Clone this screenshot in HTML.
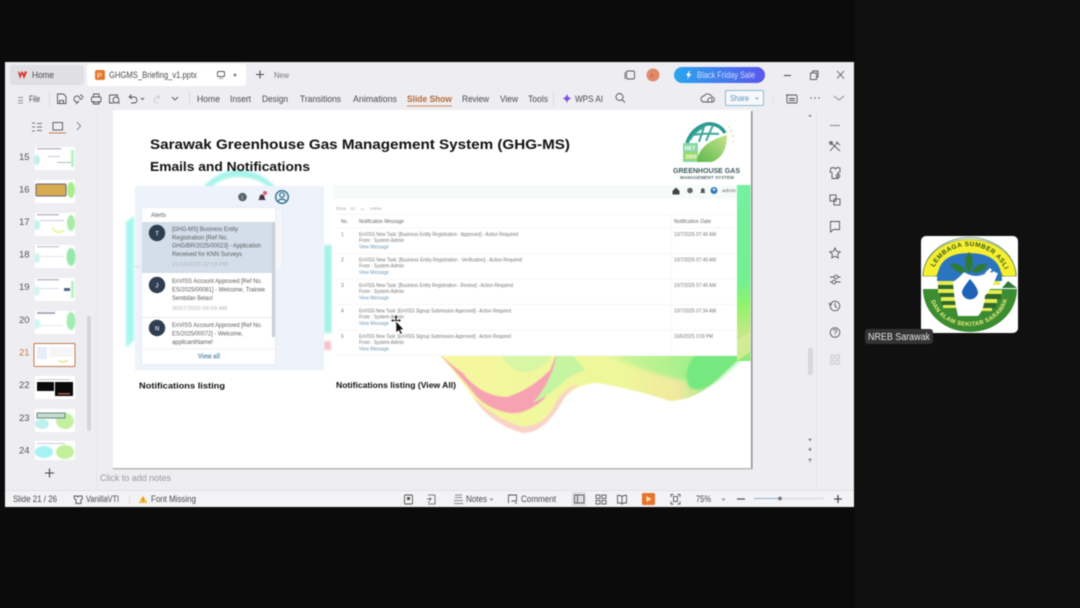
<!DOCTYPE html>
<html><head><meta charset="utf-8"><style>
html,body{margin:0;padding:0;width:1080px;height:608px;overflow:hidden;background:#0b0b0c}
svg{display:block;filter:blur(.45px)}
text{font-family:"Liberation Sans",sans-serif}
.i{fill:none;stroke:#555;stroke-width:.9}
.t{font-size:9.6px;fill:#4a4a4a}
.r{font-size:5px;fill:#777}
.l{font-size:5px;fill:#6a9ab6}
.a{font-size:6.4px;fill:#5c5c5c}
.d{font-size:5.6px;fill:#b4b4b4}
</style></head><body>
<svg width="1080" height="608" viewBox="0 0 1080 608" xmlns="http://www.w3.org/2000/svg">
<defs>
<linearGradient id="bf" x1="0" x2="1" y1="0" y2="0"><stop offset="0" stop-color="#2aa5ee"/><stop offset="1" stop-color="#5a58ee"/></linearGradient>
<linearGradient id="gw" x1="0" x2="1" y1="0" y2="0"><stop offset="0" stop-color="#f6f79f"/><stop offset=".6" stop-color="#eef79a"/><stop offset=".78" stop-color="#f2e8a0"/><stop offset=".88" stop-color="#a9e98c"/><stop offset="1" stop-color="#6fea80"/></linearGradient>
<linearGradient id="lf" x1="0" x2="1" y1="1" y2="0"><stop offset="0" stop-color="#5cb84a"/><stop offset="1" stop-color="#c6e58c"/></linearGradient>
<linearGradient id="ge" x1="0" x2="0" y1="0" y2="1"><stop offset="0" stop-color="#74f0a2"/><stop offset=".55" stop-color="#74f090"/><stop offset=".68" stop-color="#90f46c"/><stop offset=".85" stop-color="#c6e888"/><stop offset="1" stop-color="#8aea78"/></linearGradient>
<linearGradient id="gg" x1="0" x2="1" y1="0" y2="0"><stop offset="0" stop-color="#d8f698"/><stop offset=".55" stop-color="#a8f08c"/><stop offset="1" stop-color="#6ceb7c"/></linearGradient>
<filter id="b1"><feGaussianBlur stdDeviation="1"/></filter>
<filter id="b2"><feGaussianBlur stdDeviation=".6"/></filter>
<filter id="b3"><feGaussianBlur stdDeviation="2"/></filter>
<filter id="b4"><feGaussianBlur stdDeviation=".3"/></filter>
<path id="arcT" d="M930 285A39 39 0 0 1 1008 285"/>
<path id="arcB" d="M930 293A39 33 0 0 0 1008 293"/>
</defs>

<rect width="1080" height="608" fill="#0b0b0c"/>
<rect x="855" y="0" width="225" height="608" fill="#101011"/>

<!-- window -->
<rect x="5" y="62" width="849" height="445" fill="#eeeef2"/>
<rect x="5" y="491" width="849" height="16" fill="#f3f3f6"/>
<line x1="5" x2="854" y1="490.5" y2="490.5" stroke="#e2e2e6"/>

<!-- tabs -->
<rect x="10" y="65" width="74" height="20" rx="3" fill="#e0e0e4"/>
<path d="M18 72l2 7 2-5 2 5 3-7-2-1-1 3-2-3-2 3-1-3z" fill="#d8342f"/>
<text x="32" y="78" class="t" textLength="22" lengthAdjust="spacingAndGlyphs" fill="#555">Home</text>
<rect x="87" y="64" width="159" height="22" rx="3" fill="#fff"/>
<rect x="95" y="70" width="10" height="10" rx="2" fill="#e5782b"/>
<text x="97" y="78" font-size="7.5" fill="#fff">P</text>
<text x="109" y="78" class="t" textLength="88" lengthAdjust="spacingAndGlyphs">GHGMS_Briefing_v1.pptx</text>
<rect x="217.500" y="71.500" width="7" height="5" rx="1" class="i" stroke="#888"/>
<line x1="219" x2="223" y1="78.500" y2="78.500" stroke="#888" stroke-width=".8"/>
<circle cx="235" cy="75" r="1.500" fill="#888"/>
<path d="M256 74.500h8M260 70.500v8" stroke="#444" stroke-width="1" fill="none"/>
<text x="274" y="78" font-size="8.500" fill="#777" textLength="15" lengthAdjust="spacingAndGlyphs">New</text>
<rect x="626.500" y="71" width="8" height="8" rx="1.500" class="i"/>
<path d="M625 72v7" stroke="#555" stroke-width=".8"/>
<circle cx="653" cy="75" r="6.500" fill="#e2896a"/>
<text x="650" y="77.500" font-size="5.500" fill="#b9603f">A</text>
<rect x="674" y="67" width="91" height="16" rx="8" fill="url(#bf)"/>
<path d="M690 70l-4 5.500h2.500l-1.500 4 4.500-5.500h-2.500z" fill="#fff"/>
<text x="697" y="78" font-size="9" fill="#cfdcf8" textLength="58" lengthAdjust="spacingAndGlyphs">Black Friday Sale</text>
<path d="M784 75.500h7" stroke="#444" fill="none"/>
<rect x="810.500" y="73" width="6" height="6.500" class="i"/><path d="M812.500 73v-2h5.500v6h-1.500" class="i"/>
<path d="M837 71l7 7.500M844 71l-7 7.500" class="i" stroke="#444"/>

<!-- toolbar -->
<path d="M18 97.500h5M18 100.500h5M18 103h5" stroke="#777" stroke-width=".8"/>
<text x="29" y="102" class="t" textLength="11" lengthAdjust="spacingAndGlyphs">File</text>
<line x1="49.500" x2="49.500" y1="92" y2="106" stroke="#dcdce0"/>
<path d="M57.500 94h6l2.500 2.500v7h-8.500zM59.500 103.500v-3h4v3" class="i"/>
<path d="M77 102a3 3 0 1 1 3-3h2.500M76 104l3-3M80 95a3 3 0 0 1 3 3" class="i"/>
<rect x="91.500" y="97" width="9.500" height="5" rx="1" class="i"/><path d="M93.500 97v-3h5.500v3M93.500 101v3h5.500v-3" class="i"/>
<path d="M109.500 95h8v3M109.500 95v8h4" class="i"/><circle cx="116" cy="100" r="3" class="i"/><path d="M118 102l1.500 1.500" class="i"/>
<path d="M129 97l2.500-2.500M129 97l3 2M129 97h5a3 3 0 0 1 0 6h-3" class="i"/>
<path d="M141 98l1.500 1.500 1.500-1.500" class="i" stroke="#777"/>
<path d="M160 97l-2.500-2.500M160 97l-3 2M160 97h-3a3 3 0 0 0 0 6h1" style="fill:none;stroke:#ccc;stroke-width:.9"/>
<path d="M172 97l3 3 3-3" class="i" stroke="#777"/>
<line x1="189.500" x2="189.500" y1="92" y2="106" stroke="#dcdce0"/>
<text x="197" y="102" class="t" textLength="23" lengthAdjust="spacingAndGlyphs">Home</text>
<text x="230" y="102" class="t" textLength="21" lengthAdjust="spacingAndGlyphs">Insert</text>
<text x="262" y="102" class="t" textLength="26" lengthAdjust="spacingAndGlyphs">Design</text>
<text x="300" y="102" class="t" textLength="41" lengthAdjust="spacingAndGlyphs">Transitions</text>
<text x="353" y="102" class="t" textLength="44" lengthAdjust="spacingAndGlyphs">Animations</text>
<text x="407" y="102" font-size="9.500" font-weight="bold" fill="#b56a3c" textLength="45" lengthAdjust="spacingAndGlyphs">Slide Show</text>
<rect x="407" y="105.500" width="45" height="1" fill="#d08a5c"/>
<text x="462" y="102" class="t" textLength="27" lengthAdjust="spacingAndGlyphs">Review</text>
<text x="500" y="102" class="t" textLength="18" lengthAdjust="spacingAndGlyphs">View</text>
<text x="528" y="102" class="t" textLength="20" lengthAdjust="spacingAndGlyphs">Tools</text>
<line x1="553.500" x2="553.500" y1="92" y2="106" stroke="#dcdce0"/>
<path d="M567 93.500c.6 3 1.500 4 4.500 5-3 1-3.900 2-4.500 5-.6-3-1.500-4-4.500-5 3-1 3.900-2 4.500-5z" fill="#7e54d8"/>
<text x="575" y="102" class="t" textLength="28" lengthAdjust="spacingAndGlyphs">WPS AI</text>
<circle cx="619.500" cy="97" r="3.500" class="i"/><path d="M622 99.500l3 3" class="i"/>
<path d="M704 102a3 3 0 0 1 0-6 4.500 4.500 0 0 1 8 1 2.500 2.500 0 0 1 0 5z" class="i"/><circle cx="710" cy="100" r="2.200" style="fill:#eee;stroke:#555;stroke-width:.9"/>
<rect x="725.500" y="90.500" width="38" height="15" rx="1.500" fill="#f6f8fb" stroke="#8fb9d6"/>
<text x="730" y="101" font-size="8.500" fill="#5c94bd" textLength="19" lengthAdjust="spacingAndGlyphs">Share</text>
<path d="M755.500 97.500l1.500 1.500 1.500-1.500" stroke="#5c94bd" fill="none" stroke-width=".8"/>
<line x1="773.500" x2="773.500" y1="92" y2="106" stroke="#e4e4e8"/>
<rect x="787" y="95" width="10" height="8" rx="1" class="i"/><path d="M786 95h3M789 98.500h6M789 100.500h6" class="i"/>
<circle cx="811" cy="98" r=".7" fill="#555"/><circle cx="815" cy="98" r=".7" fill="#555"/><circle cx="819" cy="98" r=".7" fill="#555"/>
<path d="M834 96l5 4 5-4" style="fill:none;stroke:#888;stroke-width:.9"/>

<!-- left panel -->
<line x1="96.500" x2="96.500" y1="110" y2="490" stroke="#e6e6ea"/>
<path d="M32 123h3M32 127h3M32 131h3M37 123.500h5M37 127h5M37 130.500h5" style="fill:none;stroke:#777;stroke-width:.9"/>
<rect x="53" y="122.500" width="9.500" height="7.500" class="i"/>
<rect x="49" y="132.500" width="17" height="1" fill="#cf7d52"/>
<path d="M77 122l3.500 4-3.500 4" style="fill:none;stroke:#777;stroke-width:.9"/>

<g font-size="9.500" fill="#555">
<text x="19" y="160">15</text><text x="19" y="192.500">16</text><text x="19" y="225">17</text><text x="19" y="257.500">18</text><text x="19" y="290">19</text><text x="19" y="323">20</text><text x="19" y="355.500" fill="#c37c52">21</text><text x="19" y="388">22</text><text x="19" y="421">23</text><text x="19" y="453.500">24</text>
</g>
<!-- thumbs -->
<g>
<rect x="35" y="147" width="40" height="23" fill="#fff"/><ellipse cx="37" cy="160" rx="3" ry="5" fill="#c2f0e8" filter="url(#b2)"/><rect x="71" y="150" width="3" height="17" fill="#b8f0c0" filter="url(#b2)"/><rect x="37" y="148" width="24" height="1.500" fill="#bbc"/><rect x="48" y="156" width="12" height="1" fill="#ccd"/><rect x="57" y="162" width="14" height="1" fill="#abc"/>
<rect x="35" y="180" width="40" height="23" fill="#fff"/><rect x="36" y="184" width="30" height="12" rx="1" fill="#d9ab50" stroke="#667"/><ellipse cx="71" cy="190" rx="4" ry="8" fill="#a9ec8c" filter="url(#b2)"/>
<rect x="35" y="213" width="40" height="23" fill="#fff"/><ellipse cx="37" cy="225" rx="3" ry="5" fill="#c2f4ec" filter="url(#b2)"/><ellipse cx="71" cy="223" rx="4" ry="8" fill="#a9eca6" filter="url(#b2)"/><path d="M52 228q6 7 12 2" stroke="#eef4a8" stroke-width="2" fill="none"/><rect x="37" y="214" width="22" height="1.500" fill="#bbc"/><rect x="40" y="220" width="24" height="1" fill="#ccd"/>
<rect x="35" y="245" width="40" height="23" fill="#fff"/><ellipse cx="37" cy="258" rx="3" ry="5" fill="#cdf4ee" filter="url(#b2)"/><ellipse cx="71" cy="257" rx="4.500" ry="9" fill="#96e8ac" filter="url(#b2)"/><rect x="37" y="246" width="22" height="1.500" fill="#ccd"/><rect x="40" y="256" width="24" height="1" fill="#e6e6ee"/>
<rect x="35" y="278" width="40" height="23" fill="#fff"/><ellipse cx="37" cy="291" rx="3" ry="5" fill="#d0f6f0" filter="url(#b2)"/><rect x="71" y="281" width="3" height="17" fill="#b8f0c0" filter="url(#b2)"/><rect x="64" y="288" width="6" height="3" fill="#568"/><rect x="37" y="279" width="22" height="1.500" fill="#bbc"/><rect x="39" y="288" width="20" height="1" fill="#dde"/>
<rect x="35" y="311" width="40" height="23" fill="#fff"/><ellipse cx="37" cy="324" rx="3" ry="5" fill="#d0f6f0" filter="url(#b2)"/><ellipse cx="71" cy="321" rx="4.500" ry="9" fill="#a2ecb2" filter="url(#b2)"/><rect x="37" y="312" width="18" height="2" fill="#aab"/><rect x="39" y="325" width="24" height="1" fill="#e6e6ee"/>
<rect x="34" y="343.500" width="41" height="23" rx="1" fill="#fff" stroke="#c07a4c" stroke-width="1"/><rect x="37" y="347" width="10" height="12" fill="#e6edf8"/><rect x="49" y="347" width="24" height="10" fill="#f6f6f8"/><path d="M58 360q5 4 10 0" stroke="#eee79c" stroke-width="1.500" fill="none"/>
<rect x="35" y="376" width="40" height="23" fill="#fff"/><rect x="37" y="382" width="17" height="9" fill="#0a0a0a"/><rect x="55" y="382" width="18" height="14" fill="#0a0a0a"/><rect x="38" y="379" width="32" height="1" fill="#ccc"/><rect x="58" y="393" width="12" height="1.500" fill="#a55"/>
<rect x="35" y="409" width="40" height="23" fill="#fff"/><ellipse cx="42" cy="424" rx="7" ry="5" fill="#bdf0ee" filter="url(#b2)"/><ellipse cx="65" cy="421" rx="9" ry="8" fill="#c4f0a0" filter="url(#b2)"/><rect x="37" y="413" width="28" height="5" fill="#c8dcd0" stroke="#5f8a80"/>
<rect x="35" y="441" width="40" height="19" fill="#fff"/><ellipse cx="44" cy="452" rx="9" ry="6" fill="#a6f2f0" filter="url(#b2)"/><ellipse cx="65" cy="452" rx="9" ry="7" fill="#c2f09a" filter="url(#b2)"/><rect x="37" y="443" width="28" height="1" fill="#ccd"/>
</g>
<rect x="87" y="316" width="4" height="115" rx="2" fill="#d5d5d9"/>
<path d="M45 473h9M49.500 468.500v9" stroke="#444" stroke-width="1.100" fill="none"/>

<!-- slide -->
<rect x="113" y="110" width="638.500" height="358.500" fill="#fff"/>
<rect x="751" y="111" width="1.500" height="358" fill="#8e8e8e"/>
<rect x="113" y="468" width="639" height="1.500" fill="#b8b8b8"/>

<!-- decorations -->
<g filter="url(#b1)">
<path d="M196 195Q215 170 238 170Q262 170 278 190L272 190Q258 177 238 177Q218 177 204 195z" fill="#a8f4ec"/>
<path d="M126 222l8-6v124l-8 8z" fill="#a6f7ef"/>
<rect x="324" y="245" width="8" height="88" fill="#a6f2e6"/>
<rect x="324" y="341" width="7" height="9" fill="#f6c2ca"/>
</g>
<g filter="url(#b2)">
<path d="M437 352Q455 372 473 397Q490 424 523 433Q545 433 563 400Q575 384 597 383Q630 388 670 401Q700 400 723 373L746 352z" fill="url(#gw)"/>
<path d="M473 397Q490 424 523 433Q545 433 563 400Q575 384 582 384L574 385Q560 392 552 410Q540 428 520 426Q495 418 473 397z" fill="#f9d3c7"/>
<path d="M437 352Q455 368 463 373Q480 396 507 397Q530 390 550 370L557 352L565 352Q558 382 543 400Q525 415 510 413Q490 410 477 397Q458 373 437 352z" fill="#f7a2b2"/>
<path d="M557 352Q553 380 533 403Q552 393 560 385Q570 375 585 370L570 352z" fill="#c5f5a0"/>
<path d="M500 352Q510 375 530 372Q550 365 553 352z" fill="#d9f6a4"/>
</g>
<path d="M600 350Q640 372 690 382Q712 386 722 376L750 350z" fill="url(#gg)" filter="url(#b3)"/>
<path d="M690 388Q705 394 722 374L746 350L700 350Q680 370 690 388z" fill="#74e880" filter="url(#b1)"/>
<rect x="737" y="185" width="13.500" height="176" fill="url(#ge)"/>
<path d="M737 340l13-8v20l-13 9z" fill="#d9ec9a" opacity=".8"/>
<rect x="332" y="185" width="7" height="171" fill="#fff"/>

<!-- title -->
<text x="150" y="149" font-size="14" font-weight="bold" fill="#111" textLength="420" lengthAdjust="spacingAndGlyphs">Sarawak Greenhouse Gas Management System (GHG-MS)</text>
<text x="150" y="171" font-size="12.500" font-weight="bold" fill="#111" textLength="160" lengthAdjust="spacingAndGlyphs">Emails and Notifications</text>

<!-- GHG logo -->
<path d="M687 143Q692 128 707 124Q719 123 725 133" fill="none" stroke="#2a9a90" stroke-width="3.500"/>
<path d="M690 140Q694 132 704 127L699 142M713 125L706 141M692 135Q705 133 719 134" fill="none" stroke="#3ea69c" stroke-width="2"/>
<rect x="683" y="143" width="15" height="19" fill="#86d8a6"/>
<text x="684.500" y="150" font-size="5.500" font-weight="bold" fill="#fff">NET</text>
<rect x="684" y="152" width="13" height="8" fill="#a0d864"/>
<text x="685.500" y="158.500" font-size="5" font-weight="bold" fill="#fff">2050</text>
<path d="M697 162Q698 143 727 135Q727 156 712 162z" fill="url(#lf)"/>
<circle cx="731" cy="131" r="1" fill="#e0d88a"/><circle cx="733" cy="136" r="1" fill="#e0d88a"/><circle cx="733" cy="142" r=".8" fill="#e0d88a"/><circle cx="729" cy="127" r=".8" fill="#c6dca8"/>
<text x="673" y="173" font-size="7.500" font-weight="bold" fill="#3c5a60" textLength="67" lengthAdjust="spacingAndGlyphs">GREENHOUSE GAS</text>
<text x="680" y="179" font-size="4.300" font-weight="bold" fill="#5c7074" textLength="54" lengthAdjust="spacingAndGlyphs">MANAGEMENT SYSTEM</text>

<!-- alert panel -->
<rect x="135" y="186" width="189" height="184" fill="#edf2fb"/>
<rect x="275" y="210" width="7" height="58" fill="#f4f6fa"/>
<line x1="282.500" x2="282.500" y1="212" y2="266" stroke="#e8ebf0"/>
<rect x="133" y="266" width="9" height="1.500" fill="#e2e5ea"/>
<circle cx="242.500" cy="197" r="4.300" fill="#566"/>
<text x="241.500" y="199.500" font-size="6" fill="#dde">i</text>
<path d="M258 200q1.500-1 1.500-3a2.500 2.500 0 0 1 5 0q0 2 1.500 3z" fill="#4c3348"/><circle cx="265" cy="193" r="2" fill="#e25a70"/>
<circle cx="282" cy="197" r="6.300" fill="#e8eef4" stroke="#2f6f90" stroke-width="1.400"/>
<circle cx="282" cy="195" r="2.300" fill="none" stroke="#2f6f90" stroke-width="1.200"/><path d="M278 201q4-4 8 0" fill="none" stroke="#2f6f90" stroke-width="1.200"/>

<rect x="142" y="208" width="133" height="156" fill="#dfe3ea" filter="url(#b1)"/>
<rect x="142" y="208" width="133" height="156" rx="1" fill="#fff"/>
<text x="151" y="217" class="a" textLength="15" lengthAdjust="spacingAndGlyphs">Alerts</text>
<rect x="142" y="222" width="130" height="51" fill="#d3deea"/>
<rect x="272" y="222" width="3" height="115" fill="#c9d0d8"/>
<line x1="142" x2="272" y1="317.500" y2="317.500" stroke="#e6e8ec"/>
<line x1="142" x2="275" y1="349" y2="349" stroke="#f0f0f3"/>
<circle cx="157" cy="233" r="8.200" fill="#2f3e51"/><text x="155.300" y="235.500" font-size="6" font-weight="bold" fill="#ccd">T</text>
<circle cx="157" cy="285" r="8.200" fill="#2f3e51"/><text x="155.300" y="287.500" font-size="6" font-weight="bold" fill="#ccd">J</text>
<circle cx="157" cy="328" r="8.200" fill="#2f3e51"/><text x="155" y="330.500" font-size="6" font-weight="bold" fill="#ccd">N</text>
<g filter="url(#b4)">
<text x="172" y="231" class="a" textLength="66" lengthAdjust="spacingAndGlyphs">[GHG-MS] Business Entity</text>
<text x="172" y="239.500" class="a" textLength="56" lengthAdjust="spacingAndGlyphs">Registration [Ref No.</text>
<text x="172" y="247.500" class="a" textLength="89" lengthAdjust="spacingAndGlyphs">GHG/BR/2025/00023] - Application</text>
<text x="172" y="256" class="a" textLength="70" lengthAdjust="spacingAndGlyphs">Received for KNN Surveys</text>
<text x="172" y="266" class="d" textLength="56" lengthAdjust="spacingAndGlyphs">21/10/2025 02:19 PM</text>
<text x="172" y="283" class="a" textLength="90" lengthAdjust="spacingAndGlyphs">EnVISS Account Approved [Ref No.</text>
<text x="172" y="291.500" class="a" textLength="93" lengthAdjust="spacingAndGlyphs">ES/2025/00081] - Welcome, Trainee</text>
<text x="172" y="300" class="a" textLength="41" lengthAdjust="spacingAndGlyphs">Sembilan Belas!</text>
<text x="172" y="310" class="d" textLength="55" lengthAdjust="spacingAndGlyphs">30/07/2025 09:09 AM</text>
<text x="172" y="327" class="a" textLength="90" lengthAdjust="spacingAndGlyphs">EnVISS Account Approved [Ref No.</text>
<text x="172" y="335.500" class="a" textLength="71" lengthAdjust="spacingAndGlyphs">ES/2025/00072] - Welcome,</text>
<text x="172" y="344" class="a" textLength="41" lengthAdjust="spacingAndGlyphs">applicantName!</text>
<text x="198" y="358.500" font-size="7" font-weight="bold" fill="#5f8fae" textLength="22" lengthAdjust="spacingAndGlyphs">View all</text>
</g>

<text x="139" y="388.500" font-size="8.500" font-weight="bold" fill="#111" textLength="86" lengthAdjust="spacingAndGlyphs">Notifications listing</text>
<text x="336" y="388" font-size="8.500" font-weight="bold" fill="#111" textLength="120" lengthAdjust="spacingAndGlyphs">Notifications listing (View All)</text>

<!-- table -->
<rect x="333" y="185" width="404" height="171" fill="#fff"/>
<rect x="333" y="185" width="404" height="14" fill="#f6fbf9"/>
<path d="M672.500 191l3.500-3.500 3.500 3.500v3.500h-7z" fill="#444"/>
<circle cx="690" cy="190.500" r="2.800" fill="#666"/>
<path d="M700 193l1-1v-2a1.800 1.800 0 0 1 3.600 0v2l1 1z" fill="#555"/>
<circle cx="714" cy="190.500" r="3.500" fill="#2f79b8"/><circle cx="714" cy="189.500" r="1.300" fill="#dfe9f4"/>
<g filter="url(#b4)">
<text x="722" y="192" font-size="4.500" fill="#666" textLength="14" lengthAdjust="spacingAndGlyphs">admin</text>
<text x="336" y="210" font-size="4.500" fill="#aaa" textLength="10" lengthAdjust="spacingAndGlyphs">Show</text>
<text x="350" y="210" font-size="4.500" fill="#aaa">10</text>
<path d="M361 208.500l1.500 1.500 1.500-1.500" stroke="#888" fill="none" stroke-width=".5"/>
<text x="370" y="210" font-size="4.500" fill="#aaa" textLength="12" lengthAdjust="spacingAndGlyphs">entries</text>
<g stroke="#f3f4f6" stroke-width=".7">
<line x1="336" x2="735" y1="214.500" y2="214.500"/><line x1="336" x2="735" y1="228" y2="228"/><line x1="336" x2="735" y1="253.500" y2="253.500"/><line x1="336" x2="735" y1="279" y2="279"/><line x1="336" x2="735" y1="304.500" y2="304.500"/><line x1="336" x2="735" y1="330" y2="330"/><line x1="336" x2="735" y1="355" y2="355"/><line x1="671.500" x2="671.500" y1="214" y2="355"/>
</g>
<text x="341" y="223" font-size="5" fill="#666" textLength="7" lengthAdjust="spacingAndGlyphs">No.</text>
<text x="359" y="223" font-size="5" fill="#666" textLength="45" lengthAdjust="spacingAndGlyphs">Notification Message</text>
<text x="674" y="223" font-size="5" fill="#666" textLength="37" lengthAdjust="spacingAndGlyphs">Notification Date</text>

<text x="341" y="236" class="r">1</text>
<text x="359" y="236" class="r" textLength="159" lengthAdjust="spacingAndGlyphs">EnVISS New Task: [Business Entity Registration - Approved] - Action Required</text>
<text x="359" y="242" class="r" textLength="45" lengthAdjust="spacingAndGlyphs">From : System Admin</text>
<text x="359" y="248.500" class="l" textLength="30" lengthAdjust="spacingAndGlyphs">View Message</text>
<text x="674" y="236" class="r" textLength="42" lengthAdjust="spacingAndGlyphs">10/7/2025 07:49 AM</text>

<text x="341" y="261.500" class="r">2</text>
<text x="359" y="261.500" class="r" textLength="163" lengthAdjust="spacingAndGlyphs">EnVISS New Task: [Business Entity Registration - Verification] - Action Required</text>
<text x="359" y="267.500" class="r" textLength="45" lengthAdjust="spacingAndGlyphs">From : System Admin</text>
<text x="359" y="274" class="l" textLength="30" lengthAdjust="spacingAndGlyphs">View Message</text>
<text x="674" y="261.500" class="r" textLength="42" lengthAdjust="spacingAndGlyphs">10/7/2025 07:49 AM</text>

<text x="341" y="287" class="r">3</text>
<text x="359" y="287" class="r" textLength="154" lengthAdjust="spacingAndGlyphs">EnVISS New Task: [Business Entity Registration - Review] - Action Required</text>
<text x="359" y="293" class="r" textLength="45" lengthAdjust="spacingAndGlyphs">From : System Admin</text>
<text x="359" y="299.500" class="l" textLength="30" lengthAdjust="spacingAndGlyphs">View Message</text>
<text x="674" y="287" class="r" textLength="42" lengthAdjust="spacingAndGlyphs">10/7/2025 07:49 AM</text>

<text x="341" y="312.500" class="r">4</text>
<text x="359" y="312.500" class="r" textLength="152" lengthAdjust="spacingAndGlyphs">EnVISS New Task: [EnVISS Signup Submission Approved] - Action Required</text>
<text x="359" y="318.500" class="r" textLength="45" lengthAdjust="spacingAndGlyphs">From : System Admin</text>
<text x="359" y="325" class="l" textLength="30" lengthAdjust="spacingAndGlyphs">View Message</text>
<text x="674" y="312.500" class="r" textLength="42" lengthAdjust="spacingAndGlyphs">10/7/2025 07:34 AM</text>

<text x="341" y="338" class="r">5</text>
<text x="359" y="338" class="r" textLength="152" lengthAdjust="spacingAndGlyphs">EnVISS New Task: [EnVISS Signup Submission Approved] - Action Required</text>
<text x="359" y="344" class="r" textLength="45" lengthAdjust="spacingAndGlyphs">From : System Admin</text>
<text x="359" y="350.500" class="l" textLength="30" lengthAdjust="spacingAndGlyphs">View Message</text>
<text x="674" y="338" class="r" textLength="39" lengthAdjust="spacingAndGlyphs">10/6/2025 3:09 PM</text>
</g>

<!-- cursor -->
<path d="M392 320.500h8M396 316.500v8" stroke="#111" stroke-width="1"/>
<path d="M396 315.500l-1.500 2h3zM391 320.500l2-1.500v3zM401 320.500l-2-1.500v3z" fill="#111"/>
<path d="M396 321v12l2.600-2.500 2 3.800 1.800-.9-2-3.700 3.400-.3z" fill="#111" stroke="#fff" stroke-width=".6"/>

<!-- notes -->
<text x="100" y="481" font-size="9.500" fill="#9a9a9a" textLength="71" lengthAdjust="spacingAndGlyphs">Click to add notes</text>

<!-- right side -->
<line x1="816.500" x2="816.500" y1="110" y2="490" stroke="#e4e4e8"/>
<rect x="808" y="348" width="5" height="27" rx="2" fill="#d8d8dc"/>
<path d="M808.500 116.500l1.500-2 1.500 2z" fill="#666"/>
<path d="M808.500 439l1.500 2 1.500-2zM808.500 449l1.500 2 1.500-2zM808.500 459l1.500 2 1.500-2zM808.500 448h3M808.500 462h3" fill="#666" stroke="#666" stroke-width=".3"/>
<path d="M830 125.500h10" stroke="#888"/>
<path d="M830 142l10 9M838 142l-8 9M836 142l4 3" class="i"/><circle cx="831" cy="143" r="1.400" class="i"/>
<path d="M831 168l3-.5 1.500 1.500 1.500-1.500 3 .5v4l-2 .5v6h-6v-6l-2-.5z" class="i"/><circle cx="838" cy="176" r="1.800" class="i"/>
<rect x="830" y="195" width="6" height="6" class="i"/><rect x="834" y="199" width="6" height="6" class="i"/>
<path d="M830.500 221.500h9v8h-6l-3 2.500z" class="i"/>
<path d="M835 248l1.600 3.300 3.600.5-2.600 2.500.6 3.600-3.200-1.700-3.200 1.700.6-3.600-2.600-2.500 3.600-.5z" class="i"/>
<path d="M830 277h4M838 277h2.500M830 282h2M836 282h4.500" class="i"/><circle cx="836" cy="277" r="1.800" class="i"/><circle cx="834" cy="282" r="1.800" class="i"/>
<circle cx="835" cy="306" r="4.800" class="i"/><path d="M835 303v3l2 2M829 303l1 2 2-1" class="i"/>
<circle cx="835" cy="332.500" r="4.800" class="i"/>
<path d="M833.500 331a1.600 1.600 0 1 1 2.200 1.500l-.7.7v.7M835 335.500v.6" class="i" style="stroke-width:.8"/>
<g fill="none" stroke="#c6c6ca" stroke-width=".9"><rect x="830.500" y="355" width="3.500" height="3.500" rx=".7"/><rect x="836" y="355" width="3.500" height="3.500" rx=".7"/><rect x="830.500" y="360.500" width="3.500" height="3.500" rx=".7"/><rect x="836" y="360.500" width="3.500" height="3.500" rx=".7"/></g>

<!-- status bar -->
<text x="13" y="502" class="t" textLength="44" lengthAdjust="spacingAndGlyphs">Slide 21 / 26</text>
<path d="M74 496h3l1 1 1-1h3l.5 3-1.500.5v4h-5v-4l-1.500-.5z" class="i"/>
<text x="86" y="502" class="t" textLength="33" lengthAdjust="spacingAndGlyphs">VanillaVTI</text>
<line x1="129.500" x2="129.500" y1="495" y2="504" stroke="#eedcd8"/>
<path d="M143 495.500l4.500 7.500h-9z" fill="#f0c040"/><path d="M143 498v3" stroke="#b86030" stroke-width=".9"/>
<text x="151" y="502" class="t" textLength="45" lengthAdjust="spacingAndGlyphs">Font Missing</text>
<rect x="404.500" y="495" width="8" height="9" rx="1" class="i"/><rect x="407" y="497" width="3" height="3" fill="#555"/>
<path d="M428 495h7M435 495v9h-7M427 499h4l-1.500-1.500M431 499l-1.500 1.500M428 502h2" class="i" style="stroke-width:.8"/>
<path d="M455 495h7M455 497.500h7M454 500.500h9M454 503.500h9" stroke="#666" stroke-width=".7"/>
<text x="466" y="502" class="t" textLength="21" lengthAdjust="spacingAndGlyphs">Notes</text>
<path d="M490 498.500l1.500 1.500 1.500-1.500" stroke="#666" fill="none" stroke-width=".8"/>
<path d="M508.500 503v-8h8v6h-5" class="i"/><circle cx="516" cy="503" r=".8" fill="#555"/>
<text x="521" y="502" class="t" textLength="35" lengthAdjust="spacingAndGlyphs">Comment</text>
<rect x="572" y="492" width="14" height="14" rx="1" fill="#dedee2"/>
<rect x="574.500" y="495" width="9.500" height="8" class="i"/><path d="M577.500 495v8" class="i"/>
<rect x="596" y="495" width="4" height="3.500" class="i"/><rect x="602" y="495" width="4" height="3.500" class="i"/><rect x="596" y="500.500" width="4" height="3.500" class="i"/><rect x="602" y="500.500" width="4" height="3.500" class="i"/>
<path d="M622 496.500q-2-1.500-4.500-1v7.500q2.500-.5 4.500 1 2-1.500 4.500-1v-7.500q-2.500-.5-4.500 1zM622 496.500v7.500" class="i"/>
<rect x="642" y="493" width="13" height="12" rx="1.500" fill="#e8732c"/>
<path d="M646.500 496l5 3-5 3z" fill="#fbe3b4"/>
<path d="M671 497v-2.500h2.500M677.500 494.500h2.500v2.500M680 501.500v2.500h-2.500M673.500 504h-2.500v-2.500" class="i"/><rect x="673.500" y="496.500" width="4" height="5" class="i"/>
<text x="696" y="502" class="t" textLength="15" lengthAdjust="spacingAndGlyphs">75%</text>
<path d="M722 498.500l1.500 1.500 1.500-1.500" stroke="#666" fill="none" stroke-width=".8"/>
<path d="M737 499h8" stroke="#444" stroke-width="1.100"/>
<rect x="754" y="498" width="70" height="1" fill="#d4d4d8"/><rect x="754" y="498" width="26" height="1" fill="#8fb0c8"/>
<circle cx="780" cy="498.500" r="1.900" fill="#777"/>
<path d="M834 499h8M838 495v8" stroke="#333" stroke-width="1.100"/>

<!-- participant logo -->
<rect x="921" y="236" width="97" height="97" rx="5" fill="#fff"/>
<path d="M923 276A46 36 0 0 1 1016 276L1002 276A33 24 0 0 0 937 276z" fill="#f6ee30" stroke="#2f6e2a" stroke-width=".7"/>
<path d="M923 276A46 36 0 0 1 1016 276L1004 276A35 26 0 0 0 935 276z" fill="#f6ee30"/>
<path d="M923 276A46 38 0 0 1 1016 276" fill="none" stroke="#3a6e2a" stroke-width=".6"/>
<text font-size="6.500" font-weight="bold" fill="#2d5a20" letter-spacing=".5"><textPath href="#arcT" startOffset="15%">LEMBAGA SUMBER ASLI</textPath></text>
<path d="M937 281Q937 253 969 253Q1002 253 1002 281z" fill="#2c74c0"/>
<path d="M923 289H1017A47 43 0 0 1 970 332A47 43 0 0 1 923 289z" fill="#3c8c32"/>
<g fill="#e6ec50"><rect x="938" y="281" width="18" height="4"/><rect x="938" y="289" width="20" height="4"/><rect x="941" y="297" width="17" height="4"/><rect x="943" y="305" width="15" height="3"/><rect x="984" y="281" width="16" height="4"/><rect x="984" y="290" width="18" height="4"/><rect x="982" y="299" width="15" height="4"/><rect x="977" y="308" width="15" height="3"/></g>
<g fill="#2e6a2c"><rect x="938" y="285" width="18" height="4"/><rect x="940" y="293" width="18" height="4"/><rect x="942" y="301" width="16" height="4"/><rect x="984" y="294" width="17" height="5"/><rect x="982" y="303" width="14" height="5"/></g>
<path d="M1008 281l9 7h-15z" fill="#2f7a3a"/>
<path d="M953 282Q960 277 964 272Q976 280 988 272L998 273L993 285L985 296Q984 310 978 316H958Q954 300 953 282z" fill="#fff"/>
<path d="M986 274l5-5M990 277l5-5" stroke="#fff" stroke-width="3"/>
<path d="M970 279Q961 290 962 293A8.200 8.200 0 0 0 978 293Q978 288 970 279z" fill="#1e62b8"/>
<path d="M969 252Q961 262 969 273Q977 262 969 252z" fill="#2f7a36"/>
<path d="M950 264Q960 262 967 272Q956 275 950 264zM988 264Q978 262 971 272Q982 275 988 264z" fill="#2f7a36"/>
<text font-size="6" font-weight="bold" fill="#e8ee7a" letter-spacing=".3"><textPath href="#arcB" startOffset="7%">DAN ALAM SEKITAR SARAWAK</textPath></text>

<!-- name tag -->
<rect x="865" y="329" width="68" height="15" rx="3" fill="#333334"/>
<text x="868" y="340" font-size="10" fill="#e6e6e6" textLength="62" lengthAdjust="spacingAndGlyphs">NREB Sarawak</text>
</svg>
</body></html>
